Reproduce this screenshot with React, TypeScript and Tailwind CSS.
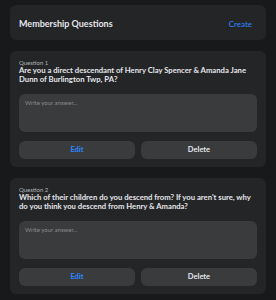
import React from 'react';

const questions = [
  {
    label: 'Question 1',
    text: 'Are you a direct descendant of Henry Clay Spencer & Amanda Jane Dunn of Burlington Twp, PA?',
  },
  {
    label: 'Question 2',
    text: "Which of their children do you descend from? If you aren't sure, why do you think you descend from Henry & Amanda?",
  },
];

export default function App() {
  return (
    <div className="min-h-[300px] bg-[#18191a] px-[10px] pt-[5px] pb-[6px] flex flex-col gap-[11px] font-['Lato',sans-serif]">
      <div className="h-[35px] rounded-md bg-[#242526] flex items-center justify-between pl-[9px] pr-[14px] pt-[2px]">
        <span className="text-[9px] font-bold text-[#e4e6eb]">Membership Questions</span>
        <span className="text-[8px] text-[#2d88ff]">Create</span>
      </div>

      {questions.map((q) => (
        <div key={q.label} className="rounded-md bg-[#242526] px-[9px] pt-[8px] pb-[8px]">
          <p className="text-[6px] leading-[7px] text-[#b0b3b8]">{q.label}</p>
          <p className="text-[7.7px] leading-[9px] font-bold text-[#e4e6eb]">{q.text}</p>
          <textarea
            placeholder="Write your answer..."
            className="mt-[10px] w-full h-[38px] resize-none rounded-md bg-[#3a3b3c] px-[6px] py-[5px] text-[6px] leading-[8px] text-[#e4e6eb] placeholder:text-[#8a8d91] outline-none block"
          />
          <div className="mt-[9px] grid grid-cols-2 gap-[6px]">
            <button className="h-[18px] rounded-md bg-[#3a3b3c] text-[7.5px] font-bold text-[#2d88ff]">Edit</button>
            <button className="h-[18px] rounded-md bg-[#3a3b3c] text-[7.5px] font-bold text-[#e4e6eb]">Delete</button>
          </div>
        </div>
      ))}
    </div>
  );
}
